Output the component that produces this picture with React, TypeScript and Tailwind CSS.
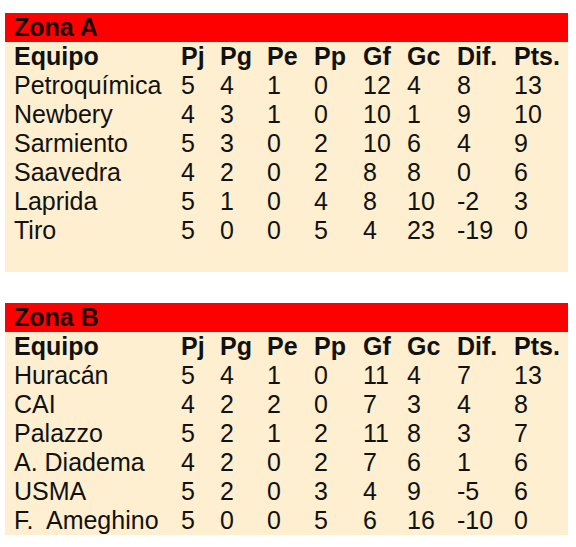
type Row = [string, string, string, string, string, string, string, string, string];

const zonaA: Row[] = [
  ["Petroquímica", "5", "4", "1", "0", "12", "4", "8", "13"],
  ["Newbery", "4", "3", "1", "0", "10", "1", "9", "10"],
  ["Sarmiento", "5", "3", "0", "2", "10", "6", "4", "9"],
  ["Saavedra", "4", "2", "0", "2", "8", "8", "0", "6"],
  ["Laprida", "5", "1", "0", "4", "8", "10", "-2", "3"],
  ["Tiro", "5", "0", "0", "5", "4", "23", "-19", "0"],
];

const zonaB: Row[] = [
  ["Huracán", "5", "4", "1", "0", "11", "4", "7", "13"],
  ["CAI", "4", "2", "2", "0", "7", "3", "4", "8"],
  ["Palazzo", "5", "2", "1", "2", "11", "8", "3", "7"],
  ["A. Diadema", "4", "2", "0", "2", "7", "6", "1", "6"],
  ["USMA", "5", "2", "0", "3", "4", "9", "-5", "6"],
  ["F.\u00a0 Ameghino", "5", "0", "0", "5", "6", "16", "-10", "0"],
];

const headers = ["Equipo", "Pj", "Pg", "Pe", "Pp", "Gf", "Gc", "Dif.", "Pts."];

const cols = "grid grid-cols-[167px_39px_47px_47px_49px_44px_50px_57px_1fr] pl-[9px] h-[29px] leading-[29px]";

const Tabla = ({ title, rows, extra }: { title: string; rows: Row[]; extra?: boolean }) => (
  <div className={`bg-[#fdefcf] ${extra ? "pb-[27px]" : "pb-0"}`}>
    {/* Zona header */}
    <div className="bg-[#ff0000] h-[29px] leading-[29px] pl-[9px] font-bold text-[#1a0500]">{title}</div>
    <div className={`${cols} font-bold`}>
      {headers.map((h) => (
        <span key={h} className="whitespace-nowrap">{h}</span>
      ))}
    </div>
    {rows.map((r) => (
      <div key={r[0]} className={cols}>
        {r.map((c, i) => (
          <span key={i} className="whitespace-nowrap">{c}</span>
        ))}
      </div>
    ))}
  </div>
);

const App = () => {
  return (
    <div
      className="w-[576px] h-[547px] bg-white pt-[13px] pl-[5px] pr-[8px] text-[25px] text-[#111]"
      style={{ fontFamily: '"Liberation Sans", Arial, sans-serif' }}
    >
      <Tabla title="Zona A" rows={zonaA} extra />
      <div className="h-[31px]" />
      <Tabla title="Zona B" rows={zonaB} />
    </div>
  );
};

export default App;
